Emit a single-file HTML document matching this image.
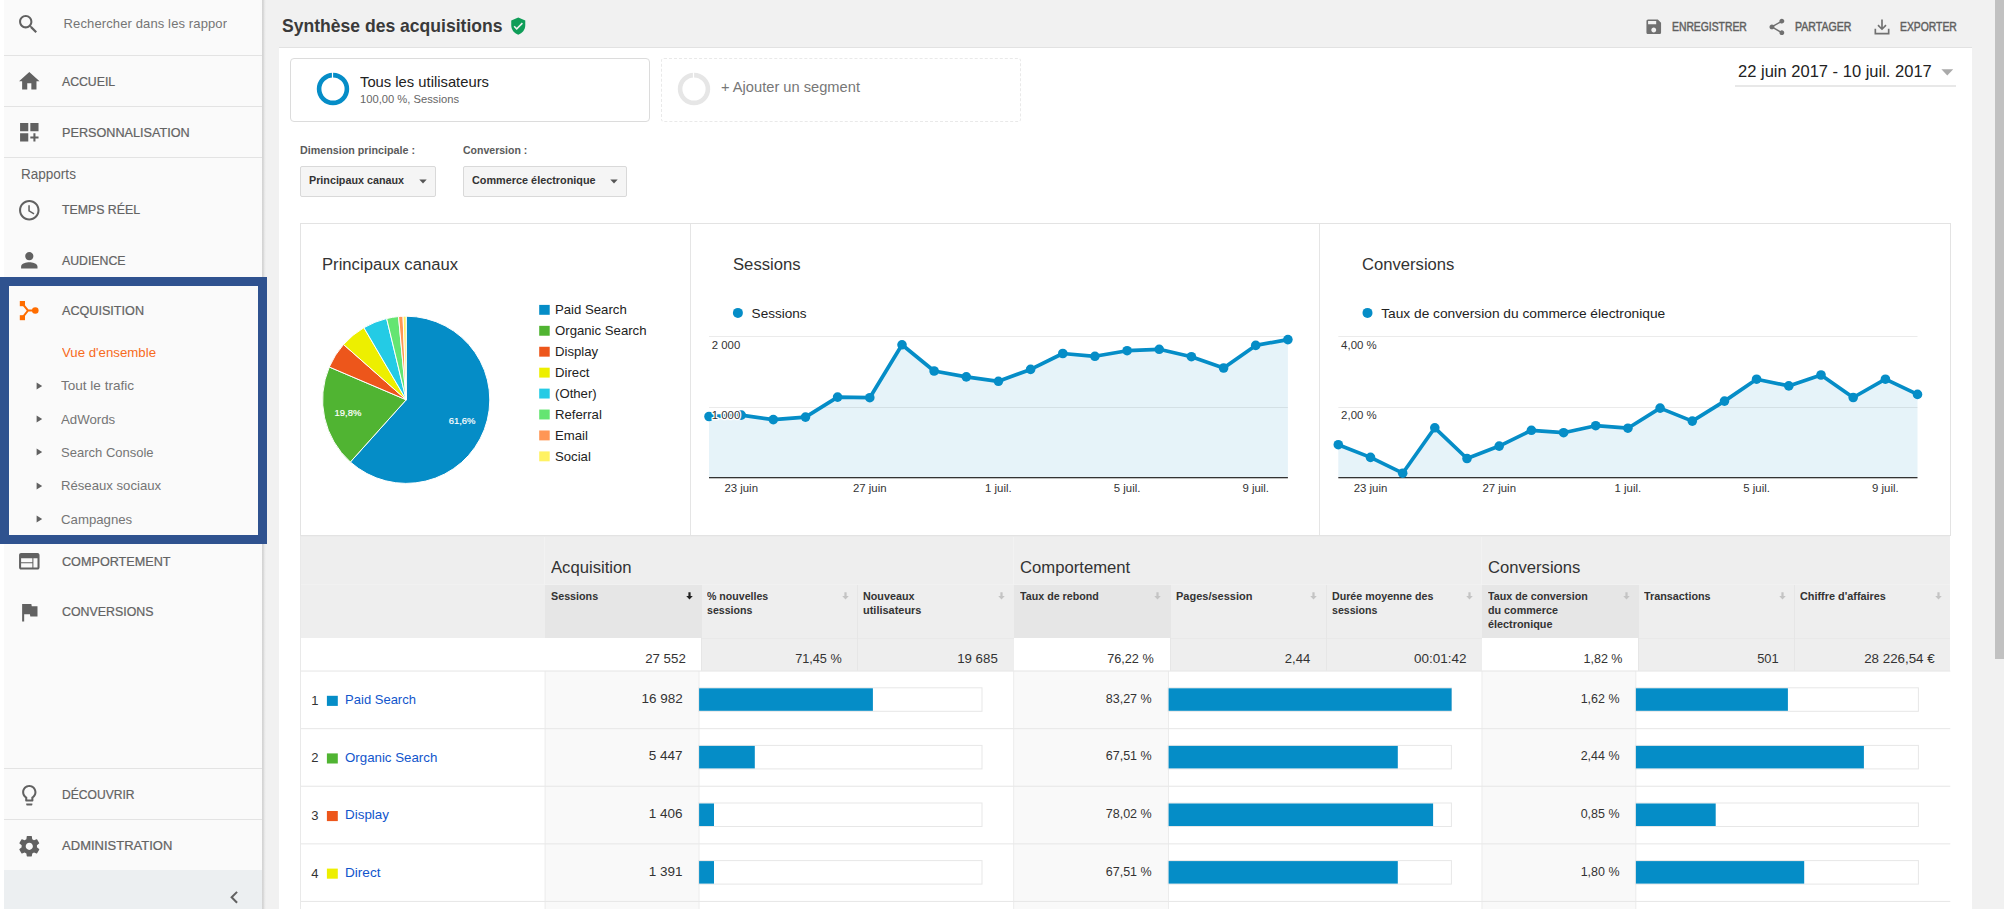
<!DOCTYPE html>
<html lang="fr"><head><meta charset="utf-8"><title>Synthèse des acquisitions</title>
<style>
html,body{margin:0;padding:0}
body{width:2004px;height:909px;overflow:hidden;position:relative;background:#f1f1f1;font-family:"Liberation Sans",sans-serif;}
#side{position:absolute;left:4px;top:0;width:258px;height:909px;background:#fafafa;}
#shade{position:absolute;left:262px;top:0;width:4px;height:909px;background:linear-gradient(to right,#d4d4d4 0,#d6d6d6 30%,#e9e9e9 65%,#f1f1f1 100%)}
#strip{position:absolute;left:0;top:0;width:4px;height:909px;background:#fff}
.t{position:absolute;white-space:nowrap;}
#sb{position:absolute;left:1987px;top:0;width:17px;height:909px;background:#f1f1f1}
#sb i{position:absolute;left:8px;top:0;width:9px;height:659px;background:#c1c1c1}
</style></head>
<body>
<div id="strip"></div><div id="shade"></div>
<nav aria-label="Navigation">
<div id="side"></div>
<div style="position:absolute;left:4px;top:55px;width:258px;height:1px;background:#e3e3e3"></div>
<div style="position:absolute;left:4px;top:106px;width:258px;height:1px;background:#e3e3e3"></div>
<div style="position:absolute;left:4px;top:157px;width:258px;height:1px;background:#e3e3e3"></div>
<div style="position:absolute;left:4px;top:768px;width:258px;height:1px;background:#e3e3e3"></div>
<div style="position:absolute;left:4px;top:819px;width:258px;height:1px;background:#e3e3e3"></div>
<div style="position:absolute;left:4px;top:870px;width:258px;height:39px;background:#eceff1"></div>
<svg style="position:absolute;left:16.2px;top:12.2px" width="24.6" height="24.6" viewBox="0 0 24 24"><path fill="#616161" d="M15.5 14h-.79l-.28-.27C15.41 12.59 16 11.11 16 9.5 16 5.91 13.09 3 9.5 3S3 5.91 3 9.5 5.91 16 9.5 16c1.61 0 3.09-.59 4.23-1.57l.27.28v.79l5 4.99L20.49 19l-4.99-5zm-6 0C7.01 14 5 11.99 5 9.5S7.01 5 9.5 5 14 7.01 14 9.5 11.99 14 9.5 14z" /></svg>
<div style="position:absolute;left:60px;top:10px;width:167px;height:30px;overflow:hidden">
<span class="t" style="top:6px;font-size:13px;line-height:15px;color:#757575;left:3.60px;letter-spacing:.12px;">Rechercher dans les rapports et l'aide</span>
</div>
<svg style="position:absolute;left:16.7px;top:69.2px" width="24.6" height="24.6" viewBox="0 0 24 24"><path fill="#616161" d="M10 20v-6h4v6h5v-8h3L12 3 2 12h3v8z" /></svg>
<span class="t" style="top:74px;font-size:13px;line-height:15px;color:#636363;left:62.10px;transform:scaleX(0.9423);transform-origin:left center;-webkit-text-stroke:.22px;">ACCUEIL</span>
<svg style="position:absolute;left:16.7px;top:120.2px" width="24.6" height="24.6" viewBox="0 0 24 24"><path fill="#616161" d="M3 3h8v8H3zm10 0h8v8h-8zM3 13h8v8H3zm15 0h-2v3h-3v2h3v3h2v-3h3v-2h-3z" /></svg>
<span class="t" style="top:125px;font-size:13px;line-height:15px;color:#636363;left:62.10px;transform:scaleX(0.9731);transform-origin:left center;-webkit-text-stroke:.22px;">PERSONNALISATION</span>
<span class="t" style="top:166px;font-size:14px;line-height:16px;color:#636363;left:21.00px;transform:scaleX(0.9664);transform-origin:left center;">Rapports</span>
<svg style="position:absolute;left:16.7px;top:197.7px" width="24.6" height="24.6" viewBox="0 0 24 24"><path fill="#616161" d="M11.99 2C6.47 2 2 6.48 2 12s4.47 10 9.99 10C17.52 22 22 17.52 22 12S17.52 2 11.99 2zM12 20c-4.42 0-8-3.58-8-8s3.58-8 8-8 8 3.58 8 8-3.58 8-8 8zm.5-13H11v6l5.25 3.15.75-1.23-4.5-2.67z" /></svg>
<span class="t" style="top:202px;font-size:13px;line-height:15px;color:#636363;left:62.10px;transform:scaleX(0.9471);transform-origin:left center;-webkit-text-stroke:.22px;">TEMPS RÉEL</span>
<svg style="position:absolute;left:16.7px;top:247.7px" width="24.6" height="24.6" viewBox="0 0 24 24"><path fill="#616161" d="M12 12c2.21 0 4-1.79 4-4s-1.79-4-4-4-4 1.79-4 4 1.79 4 4 4zm0 2c-2.67 0-8 1.34-8 4v2h16v-2c0-2.66-5.33-4-8-4z" /></svg>
<span class="t" style="top:253px;font-size:13px;line-height:15px;color:#636363;left:62.10px;transform:scaleX(0.9452);transform-origin:left center;-webkit-text-stroke:.22px;">AUDIENCE</span>
<svg style="position:absolute;left:17px;top:298px" width="24" height="24" viewBox="0 0 24 24"><g fill="#ff6d00" stroke="none"><rect x="2.8" y="3" width="5.2" height="5.2"/><rect x="2.800" y="17.200" width="5.200" height="5"/><circle cx="18.300" cy="12.500" r="3.300"/></g><path d="M5.400 5.600L11 12.500L5.400 19.600M11 12.500H18" fill="none" stroke="#ff6d00" stroke-width="2"/></svg>
<span class="t" style="top:303px;font-size:13px;line-height:15px;color:#636363;left:62.30px;transform:scaleX(0.9703);transform-origin:left center;-webkit-text-stroke:.22px;">ACQUISITION</span>
<span class="t" style="top:345px;font-size:13px;line-height:15px;color:#f76b1c;left:61.60px;transform:scaleX(1.0179);transform-origin:left center;">Vue d'ensemble</span>
<span class="t" style="top:378px;font-size:13px;line-height:15px;color:#757575;left:61.10px;transform:scaleX(1.0416);transform-origin:left center;">Tout le trafic</span>
<svg style="position:absolute;left:36px;top:381.5px" width="8" height="8" viewBox="0 0 8 8"><path d="M.6 .4L6.200 4L.6 7.600z" fill="#616161"/></svg>
<span class="t" style="top:412px;font-size:13px;line-height:15px;color:#757575;left:61.10px;transform:scaleX(1.0164);transform-origin:left center;">AdWords</span>
<svg style="position:absolute;left:36px;top:414.9px" width="8" height="8" viewBox="0 0 8 8"><path d="M.6 .4L6.200 4L.6 7.600z" fill="#616161"/></svg>
<span class="t" style="top:445px;font-size:13px;line-height:15px;color:#757575;left:61.10px;">Search Console</span>
<svg style="position:absolute;left:36px;top:448.3px" width="8" height="8" viewBox="0 0 8 8"><path d="M.6 .4L6.200 4L.6 7.600z" fill="#616161"/></svg>
<span class="t" style="top:478px;font-size:13px;line-height:15px;color:#757575;left:61.10px;transform:scaleX(1.0111);transform-origin:left center;">Réseaux sociaux</span>
<svg style="position:absolute;left:36px;top:481.7px" width="8" height="8" viewBox="0 0 8 8"><path d="M.6 .4L6.200 4L.6 7.600z" fill="#616161"/></svg>
<span class="t" style="top:512px;font-size:13px;line-height:15px;color:#757575;left:61.10px;transform:scaleX(1.0157);transform-origin:left center;">Campagnes</span>
<svg style="position:absolute;left:36px;top:515.1px" width="8" height="8" viewBox="0 0 8 8"><path d="M.6 .4L6.200 4L.6 7.600z" fill="#616161"/></svg>
<svg style="position:absolute;left:16.7px;top:549.2px" width="24.6" height="24.6" viewBox="0 0 24 24"><path fill="#616161" d="M20 4H4c-1.1 0-1.99.9-1.99 2L2 18c0 1.1.9 2 2 2h16c1.1 0 2-.9 2-2V6c0-1.1-.9-2-2-2zm-5 14H4v-4h11v4zm0-5H4V9h11v4zm5 5h-4V9h4v9z" /></svg>
<span class="t" style="top:554px;font-size:13px;line-height:15px;color:#636363;left:62.10px;transform:scaleX(0.9713);transform-origin:left center;-webkit-text-stroke:.22px;">COMPORTEMENT</span>
<svg style="position:absolute;left:16.7px;top:599.7px" width="24.6" height="24.6" viewBox="0 0 24 24"><path fill="#616161" d="M14.4 6L14 4H5v17h2v-7h5.6l.4 2h7V6z" /></svg>
<span class="t" style="top:604px;font-size:13px;line-height:15px;color:#636363;left:62.10px;transform:scaleX(0.9524);transform-origin:left center;-webkit-text-stroke:.22px;">CONVERSIONS</span>
<svg style="position:absolute;left:16.7px;top:782.7px" width="24.6" height="24.6" viewBox="0 0 24 24"><path fill="#616161" d="M9 21c0 .55.45 1 1 1h4c.55 0 1-.45 1-1v-1H9v1zm3-19C8.14 2 5 5.14 5 9c0 2.38 1.19 4.47 3 5.74V17c0 .55.45 1 1 1h6c.55 0 1-.45 1-1v-2.26c1.81-1.27 3-3.36 3-5.74 0-3.86-3.14-7-7-7zm2.85 11.1l-.85.6V16h-4v-2.3l-.85-.6C7.8 12.16 7 10.63 7 9c0-2.76 2.24-5 5-5s5 2.24 5 5c0 1.63-.8 3.16-2.15 4.1z" /></svg>
<span class="t" style="top:787px;font-size:13px;line-height:15px;color:#636363;left:62.10px;transform:scaleX(0.9294);transform-origin:left center;-webkit-text-stroke:.22px;">DÉCOUVRIR</span>
<svg style="position:absolute;left:16.7px;top:833.7px" width="24.6" height="24.6" viewBox="0 0 24 24"><path fill="#616161" d="M19.43 12.98c.04-.32.07-.64.07-.98s-.03-.66-.07-.98l2.11-1.65c.19-.15.24-.42.12-.64l-2-3.46c-.12-.22-.39-.3-.61-.22l-2.49 1c-.52-.4-1.08-.73-1.69-.98l-.38-2.65C14.46 2.18 14.25 2 14 2h-4c-.25 0-.46.18-.49.42l-.38 2.65c-.61.25-1.17.59-1.69.98l-2.49-1c-.23-.09-.49 0-.61.22l-2 3.46c-.13.22-.07.49.12.64l2.11 1.65c-.04.32-.07.65-.07.98s.03.66.07.98l-2.11 1.65c-.19.15-.24.42-.12.64l2 3.46c.12.22.39.3.61.22l2.49-1c.52.4 1.08.73 1.69.98l.38 2.65c.03.24.24.42.49.42h4c.25 0 .46-.18.49-.42l.38-2.65c.61-.25 1.17-.59 1.69-.98l2.49 1c.23.09.49 0 .61-.22l2-3.46c.12-.22.07-.49-.12-.64l-2.11-1.65zM12 15.5c-1.93 0-3.5-1.57-3.5-3.5s1.57-3.5 3.5-3.5 3.5 1.57 3.5 3.5-1.57 3.5-3.5 3.5z" /></svg>
<span class="t" style="top:838px;font-size:13px;line-height:15px;color:#636363;left:62.10px;-webkit-text-stroke:.22px;">ADMINISTRATION</span>
<svg style="position:absolute;left:222.2px;top:884.7px" width="24.6" height="24.6" viewBox="0 0 24 24"><path fill="#616161" d="M15.41 7.41L14 6l-6 6 6 6 1.41-1.41L10.83 12z" /></svg>
</nav>
<div class="hl" style="position:absolute;left:0px;top:277px;width:267px;height:267px;box-sizing:border-box;border:9px solid #2f528f;"></div>
<main>
<div class="card" style="position:absolute;left:279px;top:47px;width:1693px;height:862px;background:#fff;border-top:1px solid #e2e2e2;box-sizing:border-box"></div>
<span class="t" style="top:15px;font-size:18.5px;line-height:21px;color:#3a3a3a;font-weight:bold;left:281.70px;transform:scaleX(0.9490);transform-origin:left center;">Synthèse des acquisitions</span>
<svg style="position:absolute;left:505.6px;top:14.3px" width="24" height="24" viewBox="0 0 24 24"><path fill="#0f9d58" d="M12 1L3 5v6c0 5.55 3.84 10.740 9 12 5.160-1.260 9-6.450 9-12V5l-9-4zm-2 16l-4-4 1.410-1.410L10 14.170l6.590-6.590L18 9l-8 8z" transform="translate(2.9 2.7) scale(.78)"/></svg>
<svg style="position:absolute;left:1643.9px;top:16.8px" width="19.5" height="19.5" viewBox="0 0 24 24"><path fill="#707070" d="M17 3H5c-1.11 0-2 .9-2 2v14c0 1.1.89 2 2 2h14c1.1 0 2-.9 2-2V7l-4-4zm-5 16c-1.66 0-3-1.34-3-3s1.34-3 3-3 3 1.34 3 3-1.34 3-3 3zm3-10H5V5h10v4z" /></svg>
<span class="t" style="top:20px;font-size:12px;line-height:14px;color:#5f5f5f;left:1671.90px;transform:scaleX(0.8629);transform-origin:left center;-webkit-text-stroke:.45px;">ENREGISTRER</span>
<svg style="position:absolute;left:1767.3px;top:16.5px" width="19.8" height="19.8" viewBox="0 0 24 24"><path fill="#707070" d="M18 16.08c-.76 0-1.44.3-1.96.77L8.91 12.7c.05-.23.09-.46.09-.7s-.04-.47-.09-.7l7.05-4.11c.54.5 1.25.81 2.04.81 1.66 0 3-1.34 3-3s-1.34-3-3-3-3 1.34-3 3c0 .24.04.47.09.7L8.04 9.81C7.5 9.31 6.79 9 6 9c-1.66 0-3 1.34-3 3s1.34 3 3 3c.79 0 1.5-.31 2.04-.81l7.12 4.16c-.05.21-.08.43-.08.65 0 1.61 1.31 2.92 2.92 2.92 1.61 0 2.92-1.31 2.92-2.92s-1.31-2.92-2.92-2.92z" /></svg>
<span class="t" style="top:20px;font-size:12px;line-height:14px;color:#5f5f5f;left:1795.00px;transform:scaleX(0.8810);transform-origin:left center;-webkit-text-stroke:.45px;">PARTAGER</span>
<svg style="position:absolute;left:1871.9px;top:16.5px" width="20" height="20" viewBox="0 0 24 24"><path fill="#707070" d="M11 3h2v9.2l3.1-3.1 1.4 1.4L12 16l-5.500-5.500 1.400-1.400L11 12.200zM3 14h2v5h14v-5h2v7H3z" /></svg>
<span class="t" style="top:20px;font-size:12px;line-height:14px;color:#5f5f5f;left:1899.80px;transform:scaleX(0.8633);transform-origin:left center;-webkit-text-stroke:.45px;">EXPORTER</span>
<span class="t" style="top:62px;font-size:17px;line-height:19px;color:#222;left:1738.30px;transform:scaleX(0.9718);transform-origin:left center;">22 juin 2017 - 10 juil. 2017</span>
<svg style="position:absolute;left:1941px;top:69px" width="13" height="7" viewBox="0 0 13 7"><path d="M.4 .3h11.800L6.300 6.400z" fill="#aaa"/></svg>
<div style="position:absolute;left:1735px;top:85px;width:221px;height:2px;background:#e8e8e8"></div>
<div style="position:absolute;left:290px;top:58px;width:360px;height:64px;box-sizing:border-box;border:1px solid #dcdcdc;border-radius:4px;background:#fff"></div>
<svg style="position:absolute;left:312.900px;top:69.200px" width="40" height="40" viewBox="-20 -20 40 40"><circle r="13.900" fill="none" stroke="#058dc7" stroke-width="4.600"/><path d="M-.5 -17v6" stroke="#fff" stroke-width="1.200"/></svg>
<span class="t" style="top:74px;font-size:14.3px;line-height:16px;color:#222;left:360.00px;transform:scaleX(1.0338);transform-origin:left center;">Tous les utilisateurs</span>
<span class="t" style="top:93px;font-size:11px;line-height:12px;color:#666;left:360.00px;transform:scaleX(1.0182);transform-origin:left center;">100,00 %, Sessions</span>
<div style="position:absolute;left:661px;top:58px;width:360px;height:64px;box-sizing:border-box;border:1px dashed #e9e9e9;border-radius:3px"></div>
<svg style="position:absolute;left:674.300px;top:69px" width="40" height="40" viewBox="-20 -20 40 40"><circle r="13.900" fill="none" stroke="#e6e6e6" stroke-width="4.600"/><path d="M-.5 -17v6" stroke="#fff" stroke-width="1.200"/></svg>
<span class="t" style="top:79px;font-size:14.3px;line-height:16px;color:#777;left:721.00px;transform:scaleX(1.0255);transform-origin:left center;">+ Ajouter un segment</span>
<span class="t" style="top:144px;font-size:11px;line-height:12px;color:#5a5a5a;font-weight:bold;left:300.00px;transform:scaleX(0.9749);transform-origin:left center;">Dimension principale :</span>
<span class="t" style="top:144px;font-size:11px;line-height:12px;color:#5a5a5a;font-weight:bold;left:463.20px;transform:scaleX(0.9564);transform-origin:left center;">Conversion :</span>
<div style="position:absolute;left:300px;top:166px;width:136px;height:31px;box-sizing:border-box;border:1px solid #d9d9d9;border-radius:2px;background:#f5f5f5"></div>
<span class="t" style="top:174px;font-size:11px;line-height:12px;color:#333;font-weight:bold;left:309.00px;transform:scaleX(0.9773);transform-origin:left center;">Principaux canaux</span>
<svg style="position:absolute;left:418.500px;top:179px" width="8" height="5" viewBox="0 0 8 5"><path d="M.3 .5h7.400L4 4.500z" fill="#555"/></svg>
<div style="position:absolute;left:463px;top:166px;width:164px;height:31px;box-sizing:border-box;border:1px solid #d9d9d9;border-radius:2px;background:#f5f5f5"></div>
<span class="t" style="top:174px;font-size:11px;line-height:12px;color:#333;font-weight:bold;left:472.40px;transform:scaleX(0.9863);transform-origin:left center;">Commerce électronique</span>
<svg style="position:absolute;left:610px;top:179px" width="8" height="5" viewBox="0 0 8 5"><path d="M.3 .5h7.400L4 4.500z" fill="#555"/></svg>
<div style="position:absolute;left:300px;top:223px;width:1651px;height:313px;box-sizing:border-box;border:1px solid #e3e3e3;background:#fff"></div>
<div style="position:absolute;left:690px;top:224px;width:1px;height:311px;background:#e5e5e5"></div>
<div style="position:absolute;left:1319px;top:224px;width:1px;height:311px;background:#e5e5e5"></div>
<span class="t" style="top:255px;font-size:16.8px;line-height:19px;color:#333;left:322.20px;transform:scaleX(0.9921);transform-origin:left center;">Principaux canaux</span>
<span class="t" style="top:255px;font-size:16.8px;line-height:19px;color:#333;left:733.00px;transform:scaleX(0.9931);transform-origin:left center;">Sessions</span>
<span class="t" style="top:255px;font-size:16.8px;line-height:19px;color:#333;left:1362.30px;transform:scaleX(0.9906);transform-origin:left center;">Conversions</span>
<svg style="position:absolute;left:300px;top:290px" width="390" height="220" viewBox="300 290 390 220"><path d="M406.2,399.8L406.20,316.20A83.6,83.6 0 1 1 350.36,462.02Z" fill="#058dc7" stroke="#fff" stroke-width="1"/><path d="M406.2,399.8L350.36,462.02A83.6,83.6 0 0 1 329.29,367.03Z" fill="#50b432" stroke="#fff" stroke-width="1"/><path d="M406.2,399.8L329.29,367.03A83.6,83.6 0 0 1 343.53,344.47Z" fill="#ed561b" stroke="#fff" stroke-width="1"/><path d="M406.2,399.8L343.53,344.47A83.6,83.6 0 0 1 363.92,327.68Z" fill="#edef00" stroke="#fff" stroke-width="1"/><path d="M406.2,399.8L363.92,327.68A83.6,83.6 0 0 1 386.63,318.52Z" fill="#24cbe5" stroke="#fff" stroke-width="1"/><path d="M406.2,399.8L386.63,318.52A83.6,83.6 0 0 1 398.54,316.55Z" fill="#64e572" stroke="#fff" stroke-width="1"/><path d="M406.2,399.8L398.54,316.55A83.6,83.6 0 0 1 403.05,316.26Z" fill="#ff9655" stroke="#fff" stroke-width="1"/><path d="M406.2,399.8L403.05,316.26A83.6,83.6 0 0 1 406.20,316.20Z" fill="#fff263" stroke="#fff" stroke-width="1"/><text x="462.100" y="424.100" font-size="9.300" fill="#fff" stroke="#fff" stroke-width=".2" text-anchor="middle" textLength="26.800" lengthAdjust="spacingAndGlyphs" font-family="Liberation Sans, sans-serif">61,6%</text><text x="347.900" y="415.800" font-size="9.300" fill="#fff" stroke="#fff" stroke-width=".2" text-anchor="middle" textLength="26.800" lengthAdjust="spacingAndGlyphs" font-family="Liberation Sans, sans-serif">19,8%</text></svg>
<span class="t" style="top:302px;font-size:13px;line-height:15px;color:#222;left:555.00px;transform:scaleX(1.0130);transform-origin:left center;">Paid Search</span>
<span class="t" style="top:323px;font-size:13px;line-height:15px;color:#222;left:555.00px;transform:scaleX(1.0130);transform-origin:left center;">Organic Search</span>
<span class="t" style="top:344px;font-size:13px;line-height:15px;color:#222;left:555.00px;transform:scaleX(1.0130);transform-origin:left center;">Display</span>
<span class="t" style="top:365px;font-size:13px;line-height:15px;color:#222;left:555.00px;transform:scaleX(1.0130);transform-origin:left center;">Direct</span>
<span class="t" style="top:386px;font-size:13px;line-height:15px;color:#222;left:555.00px;transform:scaleX(1.0130);transform-origin:left center;">(Other)</span>
<span class="t" style="top:407px;font-size:13px;line-height:15px;color:#222;left:555.00px;transform:scaleX(1.0130);transform-origin:left center;">Referral</span>
<span class="t" style="top:428px;font-size:13px;line-height:15px;color:#222;left:555.00px;transform:scaleX(1.0130);transform-origin:left center;">Email</span>
<span class="t" style="top:449px;font-size:13px;line-height:15px;color:#222;left:555.00px;transform:scaleX(1.0130);transform-origin:left center;">Social</span>
<svg style="position:absolute;left:538px;top:300px" width="14" height="170" viewBox="538 300 14 170"><rect x="539.200" y="304.90" width="10.500" height="9.900" fill="#058dc7"/><rect x="539.200" y="325.83" width="10.500" height="9.900" fill="#50b432"/><rect x="539.200" y="346.76" width="10.500" height="9.900" fill="#ed561b"/><rect x="539.200" y="367.69" width="10.500" height="9.900" fill="#edef00"/><rect x="539.200" y="388.62" width="10.500" height="9.900" fill="#24cbe5"/><rect x="539.200" y="409.55" width="10.500" height="9.900" fill="#64e572"/><rect x="539.200" y="430.48" width="10.500" height="9.900" fill="#ff9655"/><rect x="539.200" y="451.41" width="10.500" height="9.900" fill="#fff263"/></svg>
<svg style="position:absolute;left:689px;top:296px" width="620" height="215" viewBox="689 296 620 215" font-family="Liberation Sans, sans-serif"><rect x="709.0" y="336" width="578.9" height="1" fill="#ebebeb"/><polygon points="709.0,477 709.0,416.5 741.2,415.1 773.3,419.6 805.5,417.1 837.6,397.1 869.8,397.7 902.0,344.8 934.1,371.0 966.3,376.9 998.4,381.3 1030.6,369.4 1062.8,353.5 1094.9,356.3 1127.1,350.7 1159.2,349.3 1191.4,356.7 1223.6,368.0 1255.7,345.4 1287.9,339.6 1287.9,477" fill="#058dc7" fill-opacity=".1"/><rect x="709.0" y="407" width="578.9" height="1" fill="#000" fill-opacity=".08"/><rect x="709.0" y="477" width="578.9" height="1.300" fill="#333"/><polyline points="709.0,416.5 741.2,415.1 773.3,419.6 805.5,417.1 837.6,397.1 869.8,397.7 902.0,344.8 934.1,371.0 966.3,376.9 998.4,381.3 1030.6,369.4 1062.8,353.5 1094.9,356.3 1127.1,350.7 1159.2,349.3 1191.4,356.7 1223.6,368.0 1255.7,345.4 1287.9,339.6" fill="none" stroke="#058dc7" stroke-width="3.700" stroke-linejoin="round"/><circle cx="709.0" cy="416.5" r="4.800" fill="#058dc7"/><circle cx="741.2" cy="415.1" r="4.800" fill="#058dc7"/><circle cx="773.3" cy="419.6" r="4.800" fill="#058dc7"/><circle cx="805.5" cy="417.1" r="4.800" fill="#058dc7"/><circle cx="837.6" cy="397.1" r="4.800" fill="#058dc7"/><circle cx="869.8" cy="397.7" r="4.800" fill="#058dc7"/><circle cx="902.0" cy="344.8" r="4.800" fill="#058dc7"/><circle cx="934.1" cy="371.0" r="4.800" fill="#058dc7"/><circle cx="966.3" cy="376.9" r="4.800" fill="#058dc7"/><circle cx="998.4" cy="381.3" r="4.800" fill="#058dc7"/><circle cx="1030.6" cy="369.4" r="4.800" fill="#058dc7"/><circle cx="1062.8" cy="353.5" r="4.800" fill="#058dc7"/><circle cx="1094.9" cy="356.3" r="4.800" fill="#058dc7"/><circle cx="1127.1" cy="350.7" r="4.800" fill="#058dc7"/><circle cx="1159.2" cy="349.3" r="4.800" fill="#058dc7"/><circle cx="1191.4" cy="356.7" r="4.800" fill="#058dc7"/><circle cx="1223.6" cy="368.0" r="4.800" fill="#058dc7"/><circle cx="1255.7" cy="345.4" r="4.800" fill="#058dc7"/><circle cx="1287.9" cy="339.6" r="4.800" fill="#058dc7"/><text x="711.8" y="349.1" font-size="11.400" fill="#333" stroke="#fff" stroke-width="2.500" stroke-linejoin="round" paint-order="stroke" textLength="28.4" lengthAdjust="spacingAndGlyphs">2 000</text><text x="711.8" y="419.1" font-size="11.400" fill="#333" stroke="#fff" stroke-width="2.500" stroke-linejoin="round" paint-order="stroke" textLength="28.4" lengthAdjust="spacingAndGlyphs">1 000</text><text x="741.2" y="492.400" font-size="11.400" fill="#333" text-anchor="middle">23 juin</text><text x="869.8" y="492.400" font-size="11.400" fill="#333" text-anchor="middle">27 juin</text><text x="998.4" y="492.400" font-size="11.400" fill="#333" text-anchor="middle">1 juil.</text><text x="1127.1" y="492.400" font-size="11.400" fill="#333" text-anchor="middle">5 juil.</text><text x="1255.7" y="492.400" font-size="11.400" fill="#333" text-anchor="middle">9 juil.</text><circle cx="737.9" cy="312.900" r="5" fill="#058dc7"/><text x="751.6" y="318" font-size="13.300" fill="#222" textLength="55" lengthAdjust="spacingAndGlyphs">Sessions</text></svg>
<svg style="position:absolute;left:1318px;top:296px" width="620" height="215" viewBox="1318 296 620 215" font-family="Liberation Sans, sans-serif"><rect x="1338.3" y="336" width="579.2" height="1" fill="#ebebeb"/><polygon points="1338.3,477 1338.3,444.7 1370.5,457.4 1402.7,473.2 1434.8,427.8 1467.0,458.5 1499.2,446.1 1531.4,430.3 1563.6,432.7 1595.7,425.7 1627.9,428.2 1660.1,408.1 1692.3,421.1 1724.5,401.1 1756.6,379.2 1788.8,385.9 1821.0,375.0 1853.2,397.5 1885.4,379.2 1917.5,394.4 1917.5,477" fill="#058dc7" fill-opacity=".1"/><rect x="1338.3" y="407" width="579.2" height="1" fill="#000" fill-opacity=".08"/><rect x="1338.3" y="477" width="579.2" height="1.300" fill="#333"/><polyline points="1338.3,444.7 1370.5,457.4 1402.7,473.2 1434.8,427.8 1467.0,458.5 1499.2,446.1 1531.4,430.3 1563.6,432.7 1595.7,425.7 1627.9,428.2 1660.1,408.1 1692.3,421.1 1724.5,401.1 1756.6,379.2 1788.8,385.9 1821.0,375.0 1853.2,397.5 1885.4,379.2 1917.5,394.4" fill="none" stroke="#058dc7" stroke-width="3.700" stroke-linejoin="round"/><circle cx="1338.3" cy="444.7" r="4.800" fill="#058dc7"/><circle cx="1370.5" cy="457.4" r="4.800" fill="#058dc7"/><circle cx="1402.7" cy="473.2" r="4.800" fill="#058dc7"/><circle cx="1434.8" cy="427.8" r="4.800" fill="#058dc7"/><circle cx="1467.0" cy="458.5" r="4.800" fill="#058dc7"/><circle cx="1499.2" cy="446.1" r="4.800" fill="#058dc7"/><circle cx="1531.4" cy="430.3" r="4.800" fill="#058dc7"/><circle cx="1563.6" cy="432.7" r="4.800" fill="#058dc7"/><circle cx="1595.7" cy="425.7" r="4.800" fill="#058dc7"/><circle cx="1627.9" cy="428.2" r="4.800" fill="#058dc7"/><circle cx="1660.1" cy="408.1" r="4.800" fill="#058dc7"/><circle cx="1692.3" cy="421.1" r="4.800" fill="#058dc7"/><circle cx="1724.5" cy="401.1" r="4.800" fill="#058dc7"/><circle cx="1756.6" cy="379.2" r="4.800" fill="#058dc7"/><circle cx="1788.8" cy="385.9" r="4.800" fill="#058dc7"/><circle cx="1821.0" cy="375.0" r="4.800" fill="#058dc7"/><circle cx="1853.2" cy="397.5" r="4.800" fill="#058dc7"/><circle cx="1885.4" cy="379.2" r="4.800" fill="#058dc7"/><circle cx="1917.5" cy="394.4" r="4.800" fill="#058dc7"/><text x="1341.1" y="349.1" font-size="11.400" fill="#333" stroke="#fff" stroke-width="2.500" stroke-linejoin="round" paint-order="stroke" textLength="35.6" lengthAdjust="spacingAndGlyphs">4,00 %</text><text x="1341.1" y="419.1" font-size="11.400" fill="#333" stroke="#fff" stroke-width="2.500" stroke-linejoin="round" paint-order="stroke" textLength="35.6" lengthAdjust="spacingAndGlyphs">2,00 %</text><text x="1370.5" y="492.400" font-size="11.400" fill="#333" text-anchor="middle">23 juin</text><text x="1499.2" y="492.400" font-size="11.400" fill="#333" text-anchor="middle">27 juin</text><text x="1627.9" y="492.400" font-size="11.400" fill="#333" text-anchor="middle">1 juil.</text><text x="1756.6" y="492.400" font-size="11.400" fill="#333" text-anchor="middle">5 juil.</text><text x="1885.4" y="492.400" font-size="11.400" fill="#333" text-anchor="middle">9 juil.</text><circle cx="1367.5" cy="312.900" r="5" fill="#058dc7"/><text x="1381.2" y="318" font-size="13.300" fill="#222" textLength="284" lengthAdjust="spacingAndGlyphs">Taux de conversion du commerce électronique</text></svg>
<div id="tbl">
<div style="position:absolute;left:300px;top:536px;width:1650.3px;height:135px;background:#eee;border-top:1px solid #ebebeb;box-sizing:border-box"></div>
<div style="position:absolute;left:300px;top:584px;width:1650.3px;height:1px;background:#f1f1f1"></div>
<div style="position:absolute;left:300px;top:637.5px;width:1650.3px;height:1px;background:#e9e9e9"></div>
<div style="position:absolute;left:545px;top:585px;width:156.5px;height:53px;background:#e6e6e6"></div>
<div style="position:absolute;left:545px;top:638px;width:156.5px;height:33px;background:#fff"></div>
<div style="position:absolute;left:544px;top:537px;width:1px;height:48px;background:#f2f2f2"></div>
<div style="position:absolute;left:1013.7px;top:585px;width:156.3px;height:53px;background:#e6e6e6"></div>
<div style="position:absolute;left:1013.7px;top:638px;width:156.3px;height:33px;background:#fff"></div>
<div style="position:absolute;left:1013px;top:537px;width:1px;height:48px;background:#f2f2f2"></div>
<div style="position:absolute;left:1482px;top:585px;width:156.2px;height:53px;background:#e6e6e6"></div>
<div style="position:absolute;left:1482px;top:638px;width:156.2px;height:33px;background:#fff"></div>
<div style="position:absolute;left:1481px;top:537px;width:1px;height:48px;background:#f2f2f2"></div>
<div style="position:absolute;left:300px;top:638px;width:245px;height:33px;background:#fff"></div>
<div style="position:absolute;left:701.0px;top:585px;width:1px;height:86px;background:#e6e6e6"></div>
<div style="position:absolute;left:857.1px;top:585px;width:1px;height:86px;background:#e6e6e6"></div>
<div style="position:absolute;left:1169.5px;top:585px;width:1px;height:86px;background:#e6e6e6"></div>
<div style="position:absolute;left:1325.5px;top:585px;width:1px;height:86px;background:#e6e6e6"></div>
<div style="position:absolute;left:1637.7px;top:585px;width:1px;height:86px;background:#e6e6e6"></div>
<div style="position:absolute;left:1793.8px;top:585px;width:1px;height:86px;background:#e6e6e6"></div>
<span class="t" style="top:558px;font-size:16.8px;line-height:19px;color:#333;left:550.70px;transform:scaleX(0.9933);transform-origin:left center;">Acquisition</span>
<span class="t" style="top:558px;font-size:16.8px;line-height:19px;color:#333;left:1019.50px;transform:scaleX(0.9927);transform-origin:left center;">Comportement</span>
<span class="t" style="top:558px;font-size:16.8px;line-height:19px;color:#333;left:1487.70px;transform:scaleX(0.9906);transform-origin:left center;">Conversions</span>
<span class="t" style="top:590px;font-size:11.2px;line-height:12px;color:#333;font-weight:bold;left:550.80px;transform:scaleX(0.9597);transform-origin:left center;">Sessions</span>
<svg style="position:absolute;left:685.8px;top:592px" width="7" height="8" viewBox="0 0 7 8"><path d="M2.400 .2h2.200v3.700h2.200L3.500 7.400L.2 3.900h2.200z" fill="#222"/></svg>
<span class="t" style="top:651px;font-size:13px;line-height:15px;color:#333;right:1318.40px;transform:scaleX(1.0211);transform-origin:right center;">27 552</span>
<span class="t" style="top:590px;font-size:11.2px;line-height:12px;color:#333;font-weight:bold;left:707.30px;transform:scaleX(0.9469);transform-origin:left center;">% nouvelles</span>
<span class="t" style="top:604px;font-size:11.2px;line-height:12px;color:#333;font-weight:bold;left:707.30px;transform:scaleX(0.9491);transform-origin:left center;">sessions</span>
<svg style="position:absolute;left:841.9px;top:592px" width="7" height="8" viewBox="0 0 7 8"><path d="M2.400 .2h2.200v3.700h2.200L3.500 7.400L.2 3.900h2.200z" fill="#c4c4c4"/></svg>
<span class="t" style="top:651px;font-size:13px;line-height:15px;color:#333;right:1162.30px;transform:scaleX(0.9748);transform-origin:right center;">71,45 %</span>
<span class="t" style="top:590px;font-size:11.2px;line-height:12px;color:#333;font-weight:bold;left:863.40px;transform:scaleX(0.9621);transform-origin:left center;">Nouveaux</span>
<span class="t" style="top:604px;font-size:11.2px;line-height:12px;color:#333;font-weight:bold;left:863.40px;transform:scaleX(0.9790);transform-origin:left center;">utilisateurs</span>
<svg style="position:absolute;left:998.0px;top:592px" width="7" height="8" viewBox="0 0 7 8"><path d="M2.400 .2h2.200v3.700h2.200L3.500 7.400L.2 3.900h2.200z" fill="#c4c4c4"/></svg>
<span class="t" style="top:651px;font-size:13px;line-height:15px;color:#333;right:1006.20px;transform:scaleX(1.0211);transform-origin:right center;">19 685</span>
<span class="t" style="top:590px;font-size:11.2px;line-height:12px;color:#333;font-weight:bold;left:1019.50px;transform:scaleX(0.9557);transform-origin:left center;">Taux de rebond</span>
<svg style="position:absolute;left:1154.3px;top:592px" width="7" height="8" viewBox="0 0 7 8"><path d="M2.400 .2h2.200v3.700h2.200L3.500 7.400L.2 3.900h2.200z" fill="#c4c4c4"/></svg>
<span class="t" style="top:651px;font-size:13px;line-height:15px;color:#333;right:849.90px;transform:scaleX(0.9748);transform-origin:right center;">76,22 %</span>
<span class="t" style="top:590px;font-size:11.2px;line-height:12px;color:#333;font-weight:bold;left:1175.80px;transform:scaleX(0.9830);transform-origin:left center;">Pages/session</span>
<svg style="position:absolute;left:1310.3px;top:592px" width="7" height="8" viewBox="0 0 7 8"><path d="M2.400 .2h2.200v3.700h2.200L3.500 7.400L.2 3.900h2.200z" fill="#c4c4c4"/></svg>
<span class="t" style="top:651px;font-size:13px;line-height:15px;color:#333;right:693.90px;transform:scaleX(1.0078);transform-origin:right center;">2,44</span>
<span class="t" style="top:590px;font-size:11.2px;line-height:12px;color:#333;font-weight:bold;left:1331.80px;transform:scaleX(0.9536);transform-origin:left center;">Durée moyenne des</span>
<span class="t" style="top:604px;font-size:11.2px;line-height:12px;color:#333;font-weight:bold;left:1331.80px;transform:scaleX(0.9491);transform-origin:left center;">sessions</span>
<svg style="position:absolute;left:1466.3px;top:592px" width="7" height="8" viewBox="0 0 7 8"><path d="M2.400 .2h2.200v3.700h2.200L3.500 7.400L.2 3.900h2.200z" fill="#c4c4c4"/></svg>
<span class="t" style="top:651px;font-size:13px;line-height:15px;color:#333;right:537.90px;transform:scaleX(1.0375);transform-origin:right center;">00:01:42</span>
<span class="t" style="top:590px;font-size:11.2px;line-height:12px;color:#333;font-weight:bold;left:1487.80px;transform:scaleX(0.9583);transform-origin:left center;">Taux de conversion</span>
<span class="t" style="top:604px;font-size:11.2px;line-height:12px;color:#333;font-weight:bold;left:1487.80px;transform:scaleX(0.9612);transform-origin:left center;">du commerce</span>
<span class="t" style="top:618px;font-size:11.2px;line-height:12px;color:#333;font-weight:bold;left:1487.80px;transform:scaleX(0.9685);transform-origin:left center;">électronique</span>
<svg style="position:absolute;left:1622.5px;top:592px" width="7" height="8" viewBox="0 0 7 8"><path d="M2.400 .2h2.200v3.700h2.200L3.500 7.400L.2 3.900h2.200z" fill="#c4c4c4"/></svg>
<span class="t" style="top:651px;font-size:13px;line-height:15px;color:#333;right:381.70px;transform:scaleX(0.9636);transform-origin:right center;">1,82 %</span>
<span class="t" style="top:590px;font-size:11.2px;line-height:12px;color:#333;font-weight:bold;left:1644.00px;transform:scaleX(0.9653);transform-origin:left center;">Transactions</span>
<svg style="position:absolute;left:1778.6px;top:592px" width="7" height="8" viewBox="0 0 7 8"><path d="M2.400 .2h2.200v3.700h2.200L3.500 7.400L.2 3.900h2.200z" fill="#c4c4c4"/></svg>
<span class="t" style="top:651px;font-size:13px;line-height:15px;color:#333;right:225.60px;transform:scaleX(0.9912);transform-origin:right center;">501</span>
<span class="t" style="top:590px;font-size:11.2px;line-height:12px;color:#333;font-weight:bold;left:1800.10px;transform:scaleX(0.9712);transform-origin:left center;">Chiffre d'affaires</span>
<svg style="position:absolute;left:1934.6px;top:592px" width="7" height="8" viewBox="0 0 7 8"><path d="M2.400 .2h2.200v3.700h2.200L3.500 7.400L.2 3.900h2.200z" fill="#c4c4c4"/></svg>
<span class="t" style="top:651px;font-size:13px;line-height:15px;color:#333;right:69.60px;transform:scaleX(1.0266);transform-origin:right center;">28 226,54 €</span>
<svg style="position:absolute;left:300px;top:670px" width="1651" height="239" viewBox="300 670 1651 239"><rect x="300" y="670.900" width="1650.300" height="240" fill="#fff"/><rect x="544.6" y="670.900" width="154.9" height="240" fill="#ececec"/><rect x="545.6" y="670.900" width="152.9" height="240" fill="#f9f9f9"/><rect x="1013.2" y="670.900" width="155.8" height="240" fill="#ececec"/><rect x="1014.2" y="670.900" width="153.8" height="240" fill="#f9f9f9"/><rect x="1481.5" y="670.900" width="154.8" height="240" fill="#ececec"/><rect x="1482.5" y="670.900" width="152.8" height="240" fill="#f9f9f9"/><rect x="300" y="670.50" width="1650.300" height="1.100" fill="#e8e8e8"/><rect x="326.900" y="695.80" width="10.900" height="10.100" fill="#058dc7"/><rect x="698.6" y="687.80" width="283.4" height="23.500" fill="#fff" stroke="#e7e7e7" stroke-width="1"/><rect x="699.1" y="688.30" width="173.8" height="22.500" fill="#058dc7"/><rect x="1168.1" y="687.80" width="283.3" height="23.500" fill="#fff" stroke="#e7e7e7" stroke-width="1"/><rect x="1168.6" y="688.30" width="283" height="22.500" fill="#058dc7"/><rect x="1635.4" y="687.80" width="283.0" height="23.500" fill="#fff" stroke="#e7e7e7" stroke-width="1"/><rect x="1635.9" y="688.30" width="152" height="22.500" fill="#058dc7"/><rect x="300" y="728.10" width="1650.300" height="1.100" fill="#e8e8e8"/><rect x="326.900" y="753.40" width="10.900" height="10.100" fill="#50b432"/><rect x="698.6" y="745.40" width="283.4" height="23.500" fill="#fff" stroke="#e7e7e7" stroke-width="1"/><rect x="699.1" y="745.90" width="55.7" height="22.500" fill="#058dc7"/><rect x="1168.1" y="745.40" width="283.3" height="23.500" fill="#fff" stroke="#e7e7e7" stroke-width="1"/><rect x="1168.6" y="745.90" width="229.2" height="22.500" fill="#058dc7"/><rect x="1635.4" y="745.40" width="283.0" height="23.500" fill="#fff" stroke="#e7e7e7" stroke-width="1"/><rect x="1635.9" y="745.90" width="228" height="22.500" fill="#058dc7"/><rect x="300" y="785.70" width="1650.300" height="1.100" fill="#e8e8e8"/><rect x="326.900" y="811.00" width="10.900" height="10.100" fill="#ed561b"/><rect x="698.6" y="803.00" width="283.4" height="23.500" fill="#fff" stroke="#e7e7e7" stroke-width="1"/><rect x="699.1" y="803.50" width="14.9" height="22.500" fill="#058dc7"/><rect x="1168.1" y="803.00" width="283.3" height="23.500" fill="#fff" stroke="#e7e7e7" stroke-width="1"/><rect x="1168.6" y="803.50" width="264.5" height="22.500" fill="#058dc7"/><rect x="1635.4" y="803.00" width="283.0" height="23.500" fill="#fff" stroke="#e7e7e7" stroke-width="1"/><rect x="1635.9" y="803.50" width="79.8" height="22.500" fill="#058dc7"/><rect x="300" y="843.30" width="1650.300" height="1.100" fill="#e8e8e8"/><rect x="326.900" y="868.60" width="10.900" height="10.100" fill="#edef00"/><rect x="698.6" y="860.60" width="283.4" height="23.500" fill="#fff" stroke="#e7e7e7" stroke-width="1"/><rect x="699.1" y="861.10" width="14.9" height="22.500" fill="#058dc7"/><rect x="1168.1" y="860.60" width="283.3" height="23.500" fill="#fff" stroke="#e7e7e7" stroke-width="1"/><rect x="1168.6" y="861.10" width="229.2" height="22.500" fill="#058dc7"/><rect x="1635.4" y="860.60" width="283.0" height="23.500" fill="#fff" stroke="#e7e7e7" stroke-width="1"/><rect x="1635.9" y="861.10" width="168.3" height="22.500" fill="#058dc7"/><rect x="300" y="900.90" width="1650.300" height="1.100" fill="#e8e8e8"/></svg>
<span class="t" style="top:693px;font-size:13px;line-height:15px;color:#333;left:311.30px;">1</span>
<span class="t" style="top:692px;font-size:13px;line-height:15px;color:#1155cc;left:345.10px;">Paid Search</span>
<span class="t" style="top:691px;font-size:13px;line-height:15px;color:#333;right:1321.70px;transform:scaleX(1.0361);transform-origin:right center;">16 982</span>
<span class="t" style="top:691px;font-size:13px;line-height:15px;color:#333;right:852.20px;transform:scaleX(0.9643);transform-origin:right center;">83,27 %</span>
<span class="t" style="top:691px;font-size:13px;line-height:15px;color:#333;right:384.90px;transform:scaleX(0.9587);transform-origin:right center;">1,62 %</span>
<span class="t" style="top:750px;font-size:13px;line-height:15px;color:#333;left:311.30px;">2</span>
<span class="t" style="top:750px;font-size:13px;line-height:15px;color:#1155cc;left:345.10px;transform:scaleX(1.0219);transform-origin:left center;">Organic Search</span>
<span class="t" style="top:748px;font-size:13px;line-height:15px;color:#333;right:1321.70px;transform:scaleX(1.0390);transform-origin:right center;">5 447</span>
<span class="t" style="top:748px;font-size:13px;line-height:15px;color:#333;right:852.20px;transform:scaleX(0.9643);transform-origin:right center;">67,51 %</span>
<span class="t" style="top:748px;font-size:13px;line-height:15px;color:#333;right:384.90px;transform:scaleX(0.9587);transform-origin:right center;">2,44 %</span>
<span class="t" style="top:808px;font-size:13px;line-height:15px;color:#333;left:311.30px;">3</span>
<span class="t" style="top:807px;font-size:13px;line-height:15px;color:#1155cc;left:345.10px;transform:scaleX(1.0322);transform-origin:left center;">Display</span>
<span class="t" style="top:806px;font-size:13px;line-height:15px;color:#333;right:1321.70px;transform:scaleX(1.0390);transform-origin:right center;">1 406</span>
<span class="t" style="top:806px;font-size:13px;line-height:15px;color:#333;right:852.20px;transform:scaleX(0.9643);transform-origin:right center;">78,02 %</span>
<span class="t" style="top:806px;font-size:13px;line-height:15px;color:#333;right:384.90px;transform:scaleX(0.9587);transform-origin:right center;">0,85 %</span>
<span class="t" style="top:866px;font-size:13px;line-height:15px;color:#333;left:311.30px;">4</span>
<span class="t" style="top:865px;font-size:13px;line-height:15px;color:#1155cc;left:345.10px;transform:scaleX(1.0457);transform-origin:left center;">Direct</span>
<span class="t" style="top:864px;font-size:13px;line-height:15px;color:#333;right:1321.70px;transform:scaleX(1.0390);transform-origin:right center;">1 391</span>
<span class="t" style="top:864px;font-size:13px;line-height:15px;color:#333;right:852.20px;transform:scaleX(0.9643);transform-origin:right center;">67,51 %</span>
<span class="t" style="top:864px;font-size:13px;line-height:15px;color:#333;right:384.90px;transform:scaleX(0.9587);transform-origin:right center;">1,80 %</span>
<div style="position:absolute;left:300px;top:536px;width:1px;height:373px;background:#e9e9e9"></div>
</div>
</main>
<div id="sb"><i></i></div>
</body></html>
